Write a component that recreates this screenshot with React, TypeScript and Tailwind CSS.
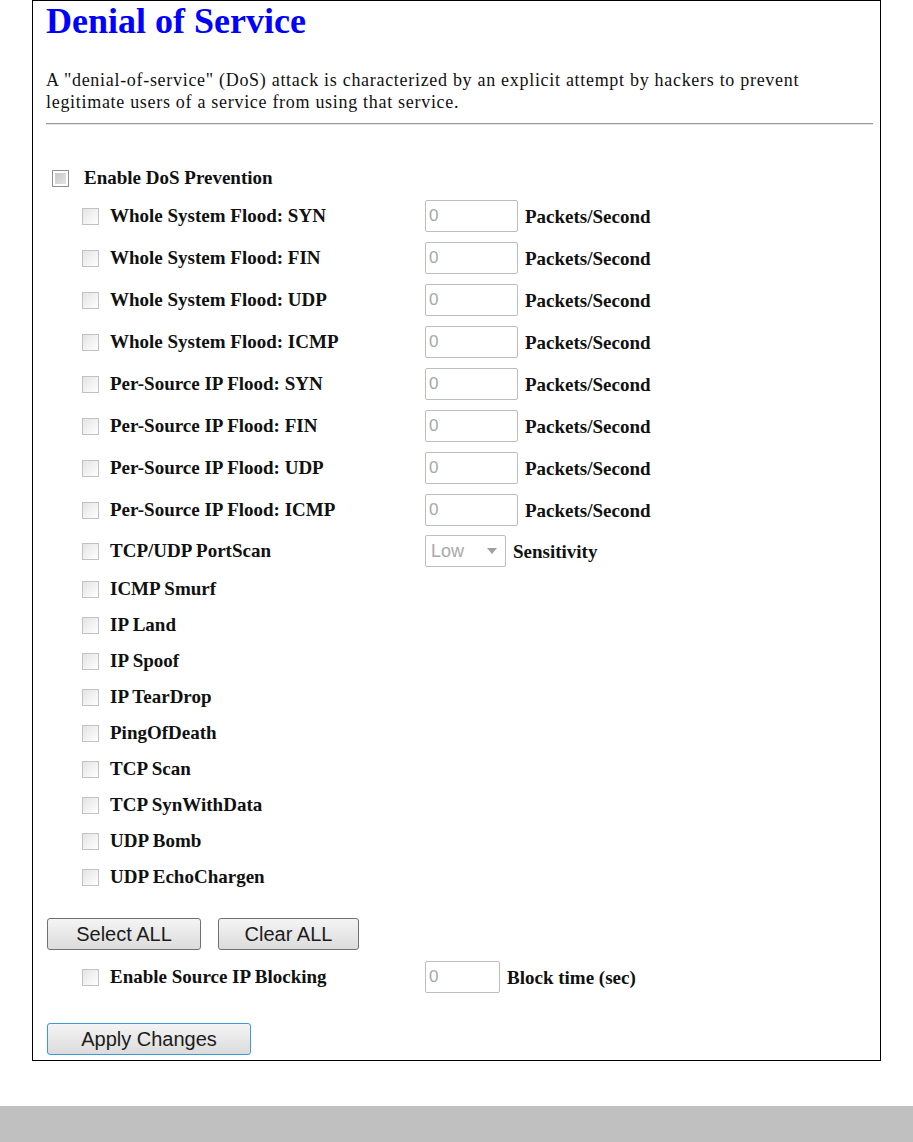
import React from 'react';

const serif = { fontFamily: '"Liberation Serif", "Times New Roman", serif' };
const sans = { fontFamily: '"Liberation Sans", Arial, sans-serif' };

const floodRows = [
  'Whole System Flood: SYN',
  'Whole System Flood: FIN',
  'Whole System Flood: UDP',
  'Whole System Flood: ICMP',
  'Per-Source IP Flood: SYN',
  'Per-Source IP Flood: FIN',
  'Per-Source IP Flood: UDP',
  'Per-Source IP Flood: ICMP',
];

const simpleRows = [
  'ICMP Smurf',
  'IP Land',
  'IP Spoof',
  'IP TearDrop',
  'PingOfDeath',
  'TCP Scan',
  'TCP SynWithData',
  'UDP Bomb',
  'UDP EchoChargen',
];

function Check({ dark = false }: { dark?: boolean }) {
  if (dark) {
    return (
      <span className="inline-block w-[17px] h-[17px] border border-[#8f8f8f] bg-white p-[2px] shrink-0">
        <span className="block w-full h-full bg-gradient-to-br from-[#c8c8c8] to-[#e4e4e4]" />
      </span>
    );
  }
  return (
    <span className="inline-block w-[17px] h-[17px] border border-[#c2c2c2] bg-gradient-to-br from-[#e4e4e4] to-white shrink-0" />
  );
}

function NumInput({ w }: { w: string }) {
  return (
    <span
      className={`${w} h-[32px] border border-[#bdbdbd] rounded-[2px] bg-white flex items-center pl-[3px] text-[17px] font-normal text-[#a8a8a8] shrink-0`}
      style={sans}
    >
      0
    </span>
  );
}

function Btn({ label, w, focus = false }: { label: string; w: string; focus?: boolean }) {
  return (
    <button
      type="button"
      className={`${w} h-[32px] rounded-[3px] border ${
        focus ? 'border-[#3b9ad8]' : 'border-[#707070]'
      } bg-gradient-to-b from-[#f4f4f4] to-[#dcdcdc] text-[20px] text-[#1c1c1c] flex items-center justify-center`}
      style={sans}
    >
      {label}
    </button>
  );
}

export default function App() {
  return (
    <div className="w-[913px] h-[1142px] bg-white flex flex-col" style={serif}>
      <div className="ml-[32px] w-[849px] border border-black pl-[13px] pr-[7px] pb-[5px] text-[#111]">
        {/* Header */}
        <h1 className="text-[36px] leading-[38px] font-bold text-[#0000ff] mt-[1px]">Denial of Service</h1>
        <p className="mt-[29px] text-[18px] leading-[22px] tracking-[0.7px]">
          A &quot;denial-of-service&quot; (DoS) attack is characterized by an explicit attempt by hackers to prevent
          <br />
          legitimate users of a service from using that service.
        </p>
        <div className="mt-[10px] h-[2px] border-t border-[#9a9a9a] bg-[#e6e6e6]" />

        {/* Rows */}
        <div className="mt-[36px] text-[19px] font-bold">
          <div className="h-[34px] flex items-center pl-[6px]">
            <Check dark />
            <span className="ml-[15px]">Enable DoS Prevention</span>
          </div>

          {floodRows.map((label) => (
            <div key={label} className="h-[42px] flex items-center pl-[36px]">
              <Check />
              <span className="ml-[11px] w-[315px]">{label}</span>
              <div className="flex items-end">
                <NumInput w="w-[93px]" />
                <span className="ml-[7px] mb-[1px]">Packets/Second</span>
              </div>
            </div>
          ))}

          <div className="h-[40px] flex items-center pl-[36px]">
            <Check />
            <span className="ml-[11px] w-[315px]">TCP/UDP PortScan</span>
            <div className="flex items-end">
              <span
                className="w-[81px] h-[32px] border border-[#bdbdbd] rounded-[2px] bg-white flex items-center justify-between pl-[5px] pr-[8px] text-[18px] font-normal text-[#a8a8a8]"
                style={sans}
              >
                Low
                <svg width="10" height="6" viewBox="0 0 10 6">
                  <path d="M0 0 L10 0 L5 6 Z" fill="#a0a0a0" />
                </svg>
              </span>
              <span className="ml-[7px] mb-[1px]">Sensitivity</span>
            </div>
          </div>

          {simpleRows.map((label) => (
            <div key={label} className="h-[36px] flex items-center pl-[36px]">
              <Check />
              <span className="ml-[11px]">{label}</span>
            </div>
          ))}
        </div>

        {/* Buttons */}
        <div className="mt-[23px] flex gap-[17px] pl-[1px]">
          <Btn label="Select ALL" w="w-[154px]" />
          <Btn label="Clear ALL" w="w-[141px]" />
        </div>

        <div className="mt-[6px] h-[42px] flex items-center pl-[36px] text-[19px] font-bold">
          <Check />
          <span className="ml-[11px] w-[315px]">Enable Source IP Blocking</span>
          <div className="flex items-end">
            <NumInput w="w-[75px]" />
            <span className="ml-[7px] mb-[1px]">Block time (sec)</span>
          </div>
        </div>

        <div className="mt-[25px] pl-[1px]">
          <Btn label="Apply Changes" w="w-[204px]" focus />
        </div>
      </div>

      <div className="mt-auto h-[36px] bg-[#c0c0c0]" />
    </div>
  );
}
